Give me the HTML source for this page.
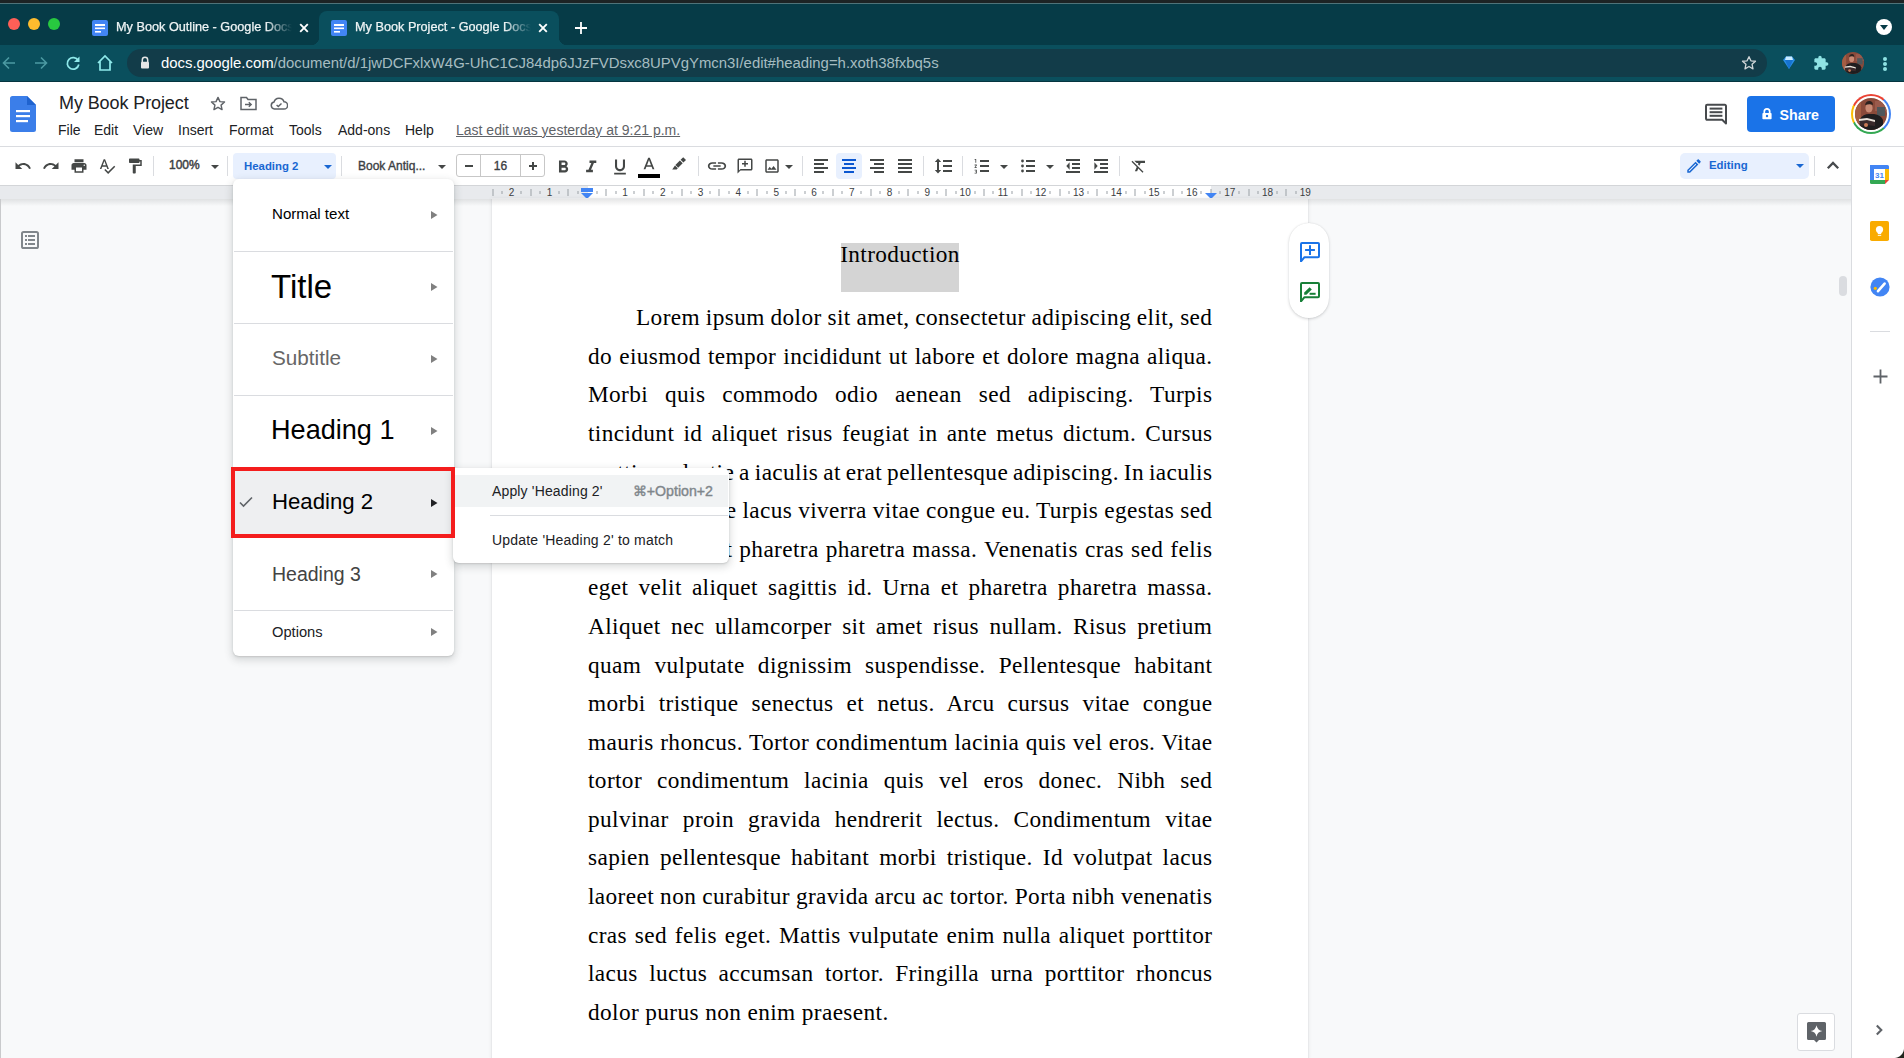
<!DOCTYPE html>
<html><head><meta charset="utf-8">
<style>
*{box-sizing:border-box;margin:0;padding:0}
html,body{width:1904px;height:1058px;overflow:hidden;background:#f8f9fa;font-family:"Liberation Sans",sans-serif;position:relative}
.abs{position:absolute}
.tabtxt{top:21px;font-size:12.7px;color:#eef4f5;white-space:nowrap;overflow:hidden;line-height:1;-webkit-text-stroke:0.25px #eef4f5}
.doc{font-family:"Liberation Serif",serif;font-size:23.3px;line-height:30px;color:#000;white-space:nowrap;letter-spacing:0.38px}
.j{text-align:justify;text-align-last:justify;white-space:normal}
.mi{white-space:nowrap;line-height:1}
</style></head>
<body>
<!-- ===== browser chrome ===== -->
<div class="abs" style="left:0;top:0;width:1904px;height:3px;background:#1d2324"></div>
<div class="abs" style="left:0;top:3px;width:1904px;height:42px;background:#063b47;border-top:1px solid #4f7379"></div>
<!-- traffic lights -->
<div class="abs" style="left:8px;top:18px;width:12px;height:12px;border-radius:50%;background:#fe5f57"></div>
<div class="abs" style="left:28px;top:18px;width:12px;height:12px;border-radius:50%;background:#febc2e"></div>
<div class="abs" style="left:48px;top:18px;width:12px;height:12px;border-radius:50%;background:#28c840"></div>
<!-- tab 1 -->
<svg class="abs" style="left:92px;top:20px" width="16" height="16" viewBox="0 0 16 16"><rect width="16" height="16" rx="2" fill="#4285f4"/><rect x="3" y="4" width="10" height="2" fill="#fff"/><rect x="3" y="7.5" width="10" height="1.6" fill="#fff"/><rect x="3" y="11" width="6" height="1.6" fill="#fff"/></svg>
<div class="abs tabtxt" style="left:116px;width:176px;-webkit-mask-image:linear-gradient(90deg,#000 85%,transparent)">My Book Outline - Google Docs</div>
<svg class="abs" style="left:298px;top:22px" width="12" height="12" viewBox="0 0 12 12"><path d="M2.2 2.2L9.8 9.8M9.8 2.2L2.2 9.8" stroke="#fff" stroke-width="1.9"/></svg>
<!-- tab 2 active -->
<div class="abs" style="left:319px;top:11px;width:240px;height:35px;background:#0a4f5d;border-radius:8px 8px 0 0"></div>
<div class="abs" style="left:311px;top:37px;width:8px;height:8px;background:radial-gradient(circle at 0 0,transparent 8px,#0a4f5d 8.5px)"></div>
<div class="abs" style="left:559px;top:37px;width:8px;height:8px;background:radial-gradient(circle at 100% 0,transparent 8px,#0a4f5d 8.5px)"></div>
<svg class="abs" style="left:331px;top:20px" width="16" height="16" viewBox="0 0 16 16"><rect width="16" height="16" rx="2" fill="#4285f4"/><rect x="3" y="4" width="10" height="2" fill="#fff"/><rect x="3" y="7.5" width="10" height="1.6" fill="#fff"/><rect x="3" y="11" width="6" height="1.6" fill="#fff"/></svg>
<div class="abs tabtxt" style="left:355px;width:176px;-webkit-mask-image:linear-gradient(90deg,#000 85%,transparent)">My Book Project - Google Docs</div>
<svg class="abs" style="left:537px;top:22px" width="12" height="12" viewBox="0 0 12 12"><path d="M2.2 2.2L9.8 9.8M9.8 2.2L2.2 9.8" stroke="#fff" stroke-width="1.9"/></svg>
<svg class="abs" style="left:574px;top:21px" width="14" height="14" viewBox="0 0 14 14"><path d="M7 1V13M1 7H13" stroke="#fff" stroke-width="1.8"/></svg>
<!-- tab search -->
<div class="abs" style="left:1876px;top:19px;width:16px;height:16px;border-radius:50%;background:#fff"></div>
<svg class="abs" style="left:1879px;top:24px" width="10" height="7" viewBox="0 0 10 7"><path d="M1 1H9L5 6Z" fill="#063b47"/></svg>
<!-- toolbar -->
<div class="abs" style="left:0;top:45px;width:1904px;height:37px;background:#0a4f5d;border-bottom:1px solid #053540"></div>
<svg class="abs" style="left:2px;top:56px" width="14" height="14" viewBox="0 0 14 14"><path d="M13 7H2M7 1.5L1.5 7L7 12.5" stroke="#4c9aa2" stroke-width="1.6" fill="none"/></svg>
<svg class="abs" style="left:34px;top:56px" width="14" height="14" viewBox="0 0 14 14"><path d="M1 7H12M7 1.5L12.5 7L7 12.5" stroke="#4c9aa2" stroke-width="1.6" fill="none"/></svg>
<svg class="abs" style="left:65px;top:55px" width="16" height="16" viewBox="0 0 16 16"><path d="M13.2 5.6A5.8 5.8 0 1 0 13.8 9.5" stroke="#8fe9ea" stroke-width="1.7" fill="none"/><path d="M14.5 1.5V7H9Z" fill="#8fe9ea"/></svg>
<svg class="abs" style="left:96px;top:54px" width="18" height="18" viewBox="0 0 18 18"><path d="M2 9L9 2L16 9M4 7.5V16H14V7.5" stroke="#8fe9ea" stroke-width="1.7" fill="none" stroke-linejoin="miter"/></svg>
<div class="abs" style="left:127px;top:49px;width:1640px;height:28px;border-radius:14px;background:#123c49"></div>
<svg class="abs" style="left:140px;top:56px" width="10" height="13" viewBox="0 0 10 13"><path d="M2.3 6V4A2.7 2.7 0 0 1 7.7 4V6" stroke="#e6e6e6" stroke-width="1.5" fill="none"/><rect x="1" y="5.8" width="8" height="6.6" rx="1" fill="#e6e6e6"/></svg>
<div class="abs" style="left:161px;top:55px;font-size:14.9px;color:#fff;white-space:nowrap">docs.google.com<span style="color:#a6bcc1">/document/d/1jwDCFxlxW4G-UhC1CJ84dp6JJzFVDsxc8UPVgYmcn3I/edit#heading=h.xoth38fxbq5s</span></div>
<svg class="abs" style="left:1741px;top:55px" width="16" height="16" viewBox="0 0 24 24"><path d="M12 2.5l2.9 6.2 6.8.7-5.1 4.6 1.4 6.7L12 17.3l-6 3.4 1.4-6.7-5.1-4.6 6.8-.7z" stroke="#d0d6d8" stroke-width="2" fill="none" stroke-linejoin="round"/></svg>
<svg class="abs" style="left:1782px;top:55px" width="14" height="16" viewBox="0 0 14 16"><path d="M1 5L4 1.5H10L13 5L7 14Z" fill="#2a8fe6"/><path d="M4 1.5H10L11 5H3Z" fill="#c9ecff"/><path d="M3 5H11L7 14Z" fill="#1673d1"/></svg>
<svg class="abs" style="left:1813px;top:55px" width="16" height="16" viewBox="0 0 24 24"><path d="M20.5 11H19V7c0-1.1-.9-2-2-2h-4V3.5C13 2.12 11.88 1 10.5 1S8 2.12 8 3.5V5H4c-1.1 0-1.99.9-1.99 2v3.8H3.5c1.49 0 2.7 1.21 2.7 2.7s-1.21 2.7-2.7 2.7H2V20c0 1.1.9 2 2 2h3.8v-1.5c0-1.49 1.21-2.7 2.7-2.7 1.49 0 2.7 1.21 2.7 2.7V22H17c1.1 0 2-.9 2-2v-4h1.5c1.38 0 2.5-1.12 2.5-2.5S21.88 11 20.5 11z" fill="#8fe3e4"/></svg>
<svg class="abs" style="left:1842px;top:52px" width="22" height="22" viewBox="0 0 32 32"><defs><clipPath id="av2"><circle cx="16" cy="16" r="16"/></clipPath></defs><g clip-path="url(#av2)"><rect width="32" height="32" fill="#8a4a3a"/><rect x="0" y="0" width="6" height="32" fill="#a45d43"/><rect x="20" y="3" width="12" height="10" fill="#9a5a4c"/><rect x="22" y="9" width="8" height="9" fill="#50565a"/><path d="M5 32V21Q8 16 14 16H19Q26 17 28 22V32Z" fill="#1f1d1f"/><ellipse cx="14" cy="10" rx="3.6" ry="4.6" fill="#c98a74"/><path d="M10 7Q11 2.5 15 3Q18 3.5 18 7Q15 5.5 10 7Z" fill="#2c2220"/><path d="M4 21L12 20L20 22L20 25L12 24L4 25Z" fill="#e9e2da"/><path d="M4 23L12 22L20 24L20 28L12 27L5 28Z" fill="#3a2a2c"/><circle cx="11" cy="27" r="2" fill="#c97a56"/></g></svg>
<div class="abs" style="left:1883px;top:57px;width:4px;height:4px;border-radius:50%;background:#8fe3e4"></div>
<div class="abs" style="left:1883px;top:62px;width:4px;height:4px;border-radius:50%;background:#8fe3e4"></div>
<div class="abs" style="left:1883px;top:67px;width:4px;height:4px;border-radius:50%;background:#8fe3e4"></div>
<!-- ===== docs header ===== -->
<div class="abs" style="left:0;top:82px;width:1904px;height:65px;background:#fff;border-bottom:1px solid #dadce0"></div>
<svg class="abs" style="left:10px;top:96px" width="26" height="36" viewBox="0 0 26 36"><path d="M0 2.5A2.5 2.5 0 0 1 2.5 0H17L26 9V33.5A2.5 2.5 0 0 1 23.5 36H2.5A2.5 2.5 0 0 1 0 33.5Z" fill="#3b7ee9"/><path d="M17 0V9H26Z" fill="#1f63cf"/><rect x="6" y="14" width="14" height="2.2" fill="#fff"/><rect x="6" y="19" width="14" height="2.2" fill="#fff"/><rect x="6" y="24" width="12" height="2.2" fill="#fff"/></svg>
<div class="abs" style="left:59px;top:93px;font-size:18px;color:#202124;white-space:nowrap;letter-spacing:-0.1px">My Book Project</div>
<svg class="abs" style="left:209px;top:95px" width="18" height="18" viewBox="0 0 24 24"><path d="M12 3.2l2.6 5.6 6.1.6-4.6 4.1 1.3 6-5.4-3.1-5.4 3.1 1.3-6-4.6-4.1 6.1-.6z" stroke="#5f6368" stroke-width="1.9" fill="none" stroke-linejoin="round"/></svg>
<svg class="abs" style="left:240px;top:96px" width="17" height="15" viewBox="0 0 17 15"><path d="M1 2V13.5H16V3.5H8L6.5 1.5H1Z" stroke="#5f6368" stroke-width="1.5" fill="none"/><path d="M5 8.5H11M8.8 6.2L11.2 8.5L8.8 10.8" stroke="#5f6368" stroke-width="1.4" fill="none"/></svg>
<svg class="abs" style="left:270px;top:97px" width="18" height="13" viewBox="0 0 18 13"><path d="M4.5 12A3.5 3.5 0 0 1 4 5.1A5.2 5.2 0 0 1 14 4.8A3.6 3.6 0 0 1 14 12Z" stroke="#5f6368" stroke-width="1.5" fill="none"/><path d="M6.6 8L8.3 9.6L11.5 6.4" stroke="#5f6368" stroke-width="1.4" fill="none"/></svg>
<div class="abs" style="left:58px;top:122px;font-size:14px;color:#202124;white-space:nowrap;word-spacing:0">
<span style="position:absolute;left:0">File</span><span style="position:absolute;left:36px">Edit</span><span style="position:absolute;left:75px">View</span><span style="position:absolute;left:120px">Insert</span><span style="position:absolute;left:171px">Format</span><span style="position:absolute;left:231px">Tools</span><span style="position:absolute;left:280px">Add-ons</span><span style="position:absolute;left:347px">Help</span><span style="position:absolute;left:398px;color:#5f6368;text-decoration:underline">Last edit was yesterday at 9:21 p.m.</span></div>
<svg class="abs" style="left:1705px;top:103px" width="22" height="22" viewBox="0 0 22 22"><path d="M2.2 1.8H19.8A1.2 1.2 0 0 1 21 3V20.5L17.2 16.8H2.2A1.2 1.2 0 0 1 1 15.6V3A1.2 1.2 0 0 1 2.2 1.8Z" stroke="#474a4d" stroke-width="2" fill="none" stroke-linejoin="round"/><rect x="4.6" y="4.6" width="12.8" height="2" fill="#474a4d"/><rect x="4.6" y="8.2" width="12.8" height="2" fill="#474a4d"/><rect x="4.6" y="11.8" width="12.8" height="2" fill="#474a4d"/></svg>
<div class="abs" style="left:1747px;top:96px;width:88px;height:36px;border-radius:4px;background:#1a73e8"></div>
<svg class="abs" style="left:1761.5px;top:108px" width="10" height="11.5" viewBox="0 0 10 11.5"><path d="M2.3 5.2V3.6A2.7 2.7 0 0 1 7.7 3.6V5.2" stroke="#fff" stroke-width="1.7" fill="none"/><rect x="0.4" y="4.9" width="9.2" height="6.4" rx="0.8" fill="#fff"/><circle cx="5" cy="8" r="1.2" fill="#1a73e8"/></svg>
<div class="abs" style="left:1779.5px;top:106.5px;font-size:14.2px;font-weight:bold;color:#fff">Share</div>
<div class="abs" style="left:1851px;top:94px;width:40px;height:40px;border-radius:50%;background:conic-gradient(#ea4335 0 42deg,#4285f4 42deg 138deg,#34a853 138deg 243deg,#fbbc04 243deg 297deg,#ea4335 297deg)"></div>
<div class="abs" style="left:1853px;top:96px;width:36px;height:36px;border-radius:50%;background:#fff"></div>
<svg class="abs" style="left:1855px;top:98px" width="32" height="32" viewBox="0 0 32 32"><defs><clipPath id="av1"><circle cx="16" cy="16" r="16"/></clipPath></defs><g clip-path="url(#av1)"><rect width="32" height="32" fill="#8a4a3a"/><rect x="0" y="0" width="6" height="32" fill="#a45d43"/><rect x="20" y="3" width="12" height="10" fill="#9a5a4c"/><rect x="22" y="9" width="8" height="9" fill="#50565a"/><path d="M5 32V21Q8 16 14 16H19Q26 17 28 22V32Z" fill="#1f1d1f"/><ellipse cx="14" cy="10" rx="3.6" ry="4.6" fill="#c98a74"/><path d="M10 7Q11 2.5 15 3Q18 3.5 18 7Q15 5.5 10 7Z" fill="#2c2220"/><path d="M4 21L12 20L20 22L20 25L12 24L4 25Z" fill="#e9e2da"/><path d="M4 23L12 22L20 24L20 28L12 27L5 28Z" fill="#3a2a2c"/><circle cx="11" cy="27" r="2" fill="#c97a56"/></g></svg>
<!-- ===== toolbar ===== -->
<div class="abs" style="left:0;top:147px;width:1851px;height:38px;background:#fff"></div>
<svg class="abs" style="left:13.5px;top:157px" width="18" height="18" viewBox="0 0 24 24"><path d="M12.5 8c-2.65 0-5.05.99-6.9 2.6L2 7v9h9l-3.62-3.62c1.39-1.16 3.16-1.88 5.12-1.880 3.54 0 6.55 2.31 7.6 5.5l2.37-.78C21.08 11.03 17.15 8 12.5 8z" fill="#444746"/></svg>
<svg class="abs" style="left:42px;top:157px" width="18" height="18" viewBox="0 0 24 24"><path d="M18.4 10.6C16.55 8.99 14.15 8 11.5 8c-4.65 0-8.58 3.03-9.96 7.22L3.9 16c1.05-3.19 4.05-5.5 7.6-5.5 1.950 0 3.73.72 5.12 1.88L13 16h9V7l-3.6 3.6z" fill="#444746"/></svg>
<svg class="abs" style="left:69.5px;top:157px" width="18" height="18" viewBox="0 0 24 24"><path d="M19 8H5c-1.66 0-3 1.34-3 3v6h4v4h12v-4h4v-6c0-1.66-1.34-3-3-3zm-3 11H8v-5h8v5zm3-7c-.55 0-1-.45-1-1s.45-1 1-1 1 .45 1 1-.45 1-1 1zm-1-9H6v4h12V3z" fill="#444746"/></svg>
<svg class="abs" style="left:98px;top:157px" width="18" height="18" viewBox="0 0 24 24"><path d="M12.45 16h2.09L9.43 3H7.57L2.46 16h2.09l1.12-3h5.64l1.14 3zm-6.02-5L8.5 5.48 10.57 11H6.43zm15.16.59l-8.09 8.09L9.83 16l-1.41 1.41 5.09 5.09L23 13l-1.41-1.41z" fill="#444746"/></svg>
<svg class="abs" style="left:126px;top:157px" width="18" height="18" viewBox="0 0 24 24"><path d="M18 4V3c0-.55-.45-1-1-1H5c-.55 0-1 .45-1 1v4c0 .55.45 1 1 1h12c.55 0 1-.45 1-1V6h1v4H9v11c0 .55.45 1 1 1h2c.55 0 1-.45 1-1v-9h8V4h-3z" fill="#444746"/></svg>
<div class="abs" style="left:153px;top:156px;width:1px;height:20px;background:#dadce0"></div>
<div class="abs" style="left:169px;top:158px;font-size:12px;color:#3c4043;-webkit-text-stroke:0.45px #3c4043">100%</div>
<svg class="abs" style="left:211px;top:165px" width="8" height="4" viewBox="0 0 8 4"><path d="M0 0H8L4 4Z" fill="#444746"/></svg>
<div class="abs" style="left:227px;top:156px;width:1px;height:20px;background:#dadce0"></div>
<div class="abs" style="left:233px;top:153px;width:103px;height:26px;border-radius:4px;background:#e8f0fe"></div>
<div class="abs" style="left:244px;top:159.7px;font-size:11.4px;font-weight:bold;color:#1967d2">Heading 2</div>
<svg class="abs" style="left:324px;top:165px" width="8" height="4" viewBox="0 0 8 4"><path d="M0 0H8L4 4Z" fill="#1967d2"/></svg>
<div class="abs" style="left:341px;top:156px;width:1px;height:20px;background:#dadce0"></div>
<div class="abs" style="left:358px;top:159px;font-size:12px;color:#3c4043;-webkit-text-stroke:0.35px #3c4043">Book Antiq...</div>
<svg class="abs" style="left:438px;top:165px" width="8" height="4" viewBox="0 0 8 4"><path d="M0 0H8L4 4Z" fill="#444746"/></svg>
<div class="abs" style="left:456px;top:154px;width:89px;height:23px;border:1px solid #c7c7c7;border-radius:3px"></div>
<div class="abs" style="left:480px;top:155px;width:1px;height:21px;background:#c7c7c7"></div>
<div class="abs" style="left:520px;top:155px;width:1px;height:21px;background:#c7c7c7"></div>
<div class="abs" style="left:465px;top:165px;width:8px;height:2.2px;background:#444746"></div>
<div class="abs" style="left:528.5px;top:165px;width:8.6px;height:2.2px;background:#444746"></div><div class="abs" style="left:531.7px;top:161.8px;width:2.2px;height:8.4px;background:#444746"></div>
<div class="abs" style="left:481px;top:159px;width:39px;text-align:center;font-size:12px;color:#3c4043;-webkit-text-stroke:0.35px #3c4043">16</div>
<svg class="abs" style="left:552.7px;top:156.5px" width="20.5" height="20.5" viewBox="0 0 24 24"><path d="M15.6 10.79c.97-.67 1.65-1.77 1.65-2.79 0-2.26-1.75-4-4-4H7v14h7.04c2.09 0 3.710-1.7 3.71-3.79 0-1.52-.86-2.82-2.15-3.42zM10 6.5h3c.83 0 1.5.67 1.5 1.5s-.67 1.5-1.5 1.5h-3v-3zm3.5 9H10v-3h3.5c.83 0 1.5.67 1.5 1.5s-.67 1.5-1.5 1.5z" fill="#444746"/></svg>
<svg class="abs" style="left:580.7px;top:156.5px" width="20.4" height="20.4" viewBox="0 0 24 24"><path d="M10 4v3h2.21l-3.42 8H6v3h8v-3h-2.21l3.42-8H18V4z" fill="#444746"/></svg>
<svg class="abs" style="left:610px;top:157.3px" width="20" height="20" viewBox="0 0 24 24"><path d="M12 17c3.31 0 6-2.69 6-6V3h-2.5v8c0 1.93-1.57 3.5-3.5 3.5S8.5 12.93 8.5 11V3H6v8c0 3.31 2.69 6 6 6zm-7 2v2h14v-2H5z" fill="#444746"/></svg>
<svg class="abs" style="left:639.1px;top:156.2px" width="20" height="20" viewBox="0 0 24 24"><path d="M11 2L5.5 16h2.25l1.12-3h6.25l1.12 3h2.25L13 2h-2zm-1.38 9L12 4.67 14.38 11H9.62z" fill="#444746"/></svg>
<svg class="abs" style="left:671px;top:156px" width="16" height="15" viewBox="0 0 16 15"><path d="M12.2 1.2L15 4L12.4 6.6L9.6 3.8Z" fill="#444746"/><path d="M8.9 4.5L11.7 7.3L7.2 11.8L4.4 9Z" fill="#444746"/><path d="M4 9.4L6.8 12.2L5.6 13.6H1.2Z" fill="#444746"/></svg>
<div class="abs" style="left:638px;top:174px;width:22px;height:4px;background:#000"></div>
<div class="abs" style="left:698px;top:156px;width:1px;height:20px;background:#dadce0"></div>
<svg class="abs" style="left:706px;top:157px" width="22" height="18" viewBox="0 0 24 24" preserveAspectRatio="none"><path d="M3.9 12c0-1.71 1.39-3.1 3.1-3.1h4V7H7c-2.76 0-5 2.24-5 5s2.24 5 5 5h4v-1.9H7c-1.71 0-3.1-1.39-3.1-3.1zM8 13h8v-2H8v2zm9-6h-4v1.9h4c1.71 0 3.1 1.39 3.1 3.1s-1.39 3.1-3.1 3.1h-4V17h4c2.76 0 5-2.24 5-5s-2.24-5-5-5z" fill="#444746"/></svg>
<svg class="abs" style="left:735.5px;top:157px" width="18" height="18" viewBox="0 0 24 24"><path d="M20 2H4c-1.1 0-2 .9-2 2v18l4-4h14c1.1 0 2-.9 2-2V4c0-1.1-.9-2-2-2zm0 14H6l-2 2V4h16v12zM11 5h2v3h3v2h-3v3h-2v-3H8V8h3z" fill="#444746"/></svg>
<svg class="abs" style="left:763px;top:157px" width="18" height="18" viewBox="0 0 24 24"><path d="M19 5v14H5V5h14m0-2H5c-1.1 0-2 .9-2 2v14c0 1.1.9 2 2 2h14c1.1 0 2-.9 2-2V5c0-1.1-.9-2-2-2zm-4.86 8.86l-3 3.87L9 13.14 6 17h12l-3.86-5.14z" fill="#444746"/></svg>
<svg class="abs" style="left:785px;top:165px" width="8" height="4" viewBox="0 0 8 4"><path d="M0 0H8L4 4Z" fill="#444746"/></svg>
<div class="abs" style="left:802px;top:156px;width:1px;height:20px;background:#dadce0"></div>
<div class="abs" style="left:836px;top:153px;width:26px;height:26px;border-radius:4px;background:#e8f0fe"></div>
<div class="abs" style="left:814px;top:159px;width:14px;height:2px;background:#444746"></div><div class="abs" style="left:814px;top:163px;width:10px;height:2px;background:#444746"></div><div class="abs" style="left:814px;top:167px;width:14px;height:2px;background:#444746"></div><div class="abs" style="left:814px;top:171px;width:10px;height:2px;background:#444746"></div>
<div class="abs" style="left:842px;top:159px;width:14px;height:2px;background:#0b57d0"></div><div class="abs" style="left:844px;top:163px;width:10px;height:2px;background:#0b57d0"></div><div class="abs" style="left:842px;top:167px;width:14px;height:2px;background:#0b57d0"></div><div class="abs" style="left:844px;top:171px;width:10px;height:2px;background:#0b57d0"></div>
<div class="abs" style="left:870px;top:159px;width:14px;height:2px;background:#444746"></div><div class="abs" style="left:874px;top:163px;width:10px;height:2px;background:#444746"></div><div class="abs" style="left:870px;top:167px;width:14px;height:2px;background:#444746"></div><div class="abs" style="left:874px;top:171px;width:10px;height:2px;background:#444746"></div>
<div class="abs" style="left:898px;top:159px;width:14px;height:2px;background:#444746"></div><div class="abs" style="left:898px;top:163px;width:14px;height:2px;background:#444746"></div><div class="abs" style="left:898px;top:167px;width:14px;height:2px;background:#444746"></div><div class="abs" style="left:898px;top:171px;width:14px;height:2px;background:#444746"></div>
<div class="abs" style="left:923px;top:156px;width:1px;height:20px;background:#dadce0"></div>
<svg class="abs" style="left:934px;top:158px" width="8" height="16" viewBox="0 0 8 16"><path d="M4 0.5L7.2 4H5V12H7.2L4 15.5L0.8 12H3V4H0.8Z" fill="#444746"/></svg>
<div class="abs" style="left:943px;top:160px;width:9px;height:2px;background:#444746"></div><div class="abs" style="left:943px;top:165px;width:9px;height:2px;background:#444746"></div><div class="abs" style="left:943px;top:170px;width:9px;height:2px;background:#444746"></div>
<div class="abs" style="left:962px;top:156px;width:1px;height:20px;background:#dadce0"></div>
<svg class="abs" style="left:974px;top:158px" width="4" height="16" viewBox="0 0 4 16"><path d="M0.6 1H2.2V4.8H1.4V1.8H0.6Z M0.6 6.6H2.8V7.4L1.4 9.2H2.8V10H0.6V9.3L2 7.4H0.6Z M0.6 11.8H2.8V15.6H0.6V14.8H2V14.1H1.2V13.4H2V12.6H0.6Z" fill="#444746"/></svg>
<div class="abs" style="left:980px;top:160px;width:9px;height:2px;background:#444746"></div><div class="abs" style="left:980px;top:165px;width:9px;height:2px;background:#444746"></div><div class="abs" style="left:980px;top:170px;width:9px;height:2px;background:#444746"></div>
<svg class="abs" style="left:1000px;top:165px" width="8" height="4" viewBox="0 0 8 4"><path d="M0 0H8L4 4Z" fill="#444746"/></svg>
<svg class="abs" style="left:1021px;top:158px" width="3" height="16" viewBox="0 0 3 16"><circle cx="1.5" cy="3" r="1.4" fill="#444746"/><circle cx="1.5" cy="8" r="1.4" fill="#444746"/><circle cx="1.5" cy="13" r="1.4" fill="#444746"/></svg>
<div class="abs" style="left:1026px;top:160px;width:9px;height:2px;background:#444746"></div><div class="abs" style="left:1026px;top:165px;width:9px;height:2px;background:#444746"></div><div class="abs" style="left:1026px;top:170px;width:9px;height:2px;background:#444746"></div>
<svg class="abs" style="left:1046px;top:165px" width="8" height="4" viewBox="0 0 8 4"><path d="M0 0H8L4 4Z" fill="#444746"/></svg>
<div class="abs" style="left:1066px;top:159px;width:14px;height:2px;background:#444746"></div><div class="abs" style="left:1072px;top:163px;width:8px;height:2px;background:#444746"></div><div class="abs" style="left:1072px;top:167px;width:8px;height:2px;background:#444746"></div><div class="abs" style="left:1066px;top:171px;width:14px;height:2px;background:#444746"></div>
<svg class="abs" style="left:1066px;top:162px" width="4" height="8" viewBox="0 0 4 8"><path d="M3.6 0.3V7.7L0.3 4Z" fill="#444746"/></svg>
<div class="abs" style="left:1094px;top:159px;width:14px;height:2px;background:#444746"></div><div class="abs" style="left:1100px;top:163px;width:8px;height:2px;background:#444746"></div><div class="abs" style="left:1100px;top:167px;width:8px;height:2px;background:#444746"></div><div class="abs" style="left:1094px;top:171px;width:14px;height:2px;background:#444746"></div>
<svg class="abs" style="left:1094px;top:162px" width="4" height="8" viewBox="0 0 4 8"><path d="M0.4 0.3V7.7L3.7 4Z" fill="#444746"/></svg>
<div class="abs" style="left:1119px;top:156px;width:1px;height:20px;background:#dadce0"></div>
<svg class="abs" style="left:1129.5px;top:157px" width="18" height="18" viewBox="0 0 24 24"><path d="M3.27 5L2 6.27l6.97 6.97L6.5 19h3l1.57-3.66L16.73 21 18 19.73 3.55 5.27 3.27 5zM6 5v.18L8.82 8h2.4l-.72 1.68 2.1 2.1L14.21 8H20V5H6z" fill="#444746"/></svg>
<div class="abs" style="left:1680px;top:153px;width:129px;height:26px;border-radius:5px;background:#e8f0fe"></div>
<svg class="abs" style="left:1684.5px;top:156.5px" width="18" height="18" viewBox="0 0 24 24"><path d="M3 17.25V21h3.75L17.81 9.94l-3.75-3.75L3 17.25zM5.92 19H5v-.92l9.06-9.06.92.92L5.92 19zM20.71 5.63l-2.34-2.34c-.2-.2-.45-.29-.71-.29s-.51.1-.7.29l-1.83 1.83 3.75 3.75 1.83-1.83c.39-.39.39-1.02 0-1.41z" fill="#1967d2"/></svg>
<div class="abs" style="left:1709px;top:159px;font-size:11.4px;font-weight:bold;color:#1967d2">Editing</div>
<svg class="abs" style="left:1796px;top:164px" width="8" height="4" viewBox="0 0 8 4"><path d="M0 0H8L4 4Z" fill="#1967d2"/></svg>
<div class="abs" style="left:1814px;top:156px;width:1px;height:20px;background:#dadce0"></div>
<svg class="abs" style="left:1825px;top:159px" width="16" height="12" viewBox="0 0 16 12"><path d="M2.8 9.2L8 4L13.2 9.2" stroke="#474a4d" stroke-width="2.3" fill="none"/></svg>
<!-- ===== ruler ===== -->
<div class="abs" style="left:0;top:185px;width:1851px;height:15px;background:#e8eaed;border-top:1px solid #d3d5d8;border-bottom:1px solid #d3d5d8"></div>
<div class="abs" style="left:588px;top:186px;width:623px;height:13px;background:#fff"></div>
<svg class="abs" style="left:0;top:182px" width="1851" height="20" viewBox="0 0 1851 20"><rect x="492.5" y="7" width="1" height="7" fill="#9aa0a6"/><rect x="501.5" y="9" width="1" height="3" fill="#9aa0a6"/><text x="511.61" y="13.9" font-size="10px" text-anchor="middle" fill="#3c4043" font-family="Liberation Sans">2</text><rect x="520.5" y="9" width="1" height="3" fill="#9aa0a6"/><rect x="530.5" y="7" width="1" height="7" fill="#9aa0a6"/><rect x="539.5" y="9" width="1" height="3" fill="#9aa0a6"/><text x="549.41" y="13.9" font-size="10px" text-anchor="middle" fill="#3c4043" font-family="Liberation Sans">1</text><rect x="558.5" y="9" width="1" height="3" fill="#9aa0a6"/><rect x="567.5" y="7" width="1" height="7" fill="#9aa0a6"/><rect x="577.5" y="9" width="1" height="3" fill="#9aa0a6"/><rect x="596.5" y="9" width="1" height="3" fill="#9aa0a6"/><rect x="605.5" y="7" width="1" height="7" fill="#9aa0a6"/><rect x="615.5" y="9" width="1" height="3" fill="#9aa0a6"/><text x="625.00" y="13.9" font-size="10px" text-anchor="middle" fill="#3c4043" font-family="Liberation Sans">1</text><rect x="633.5" y="9" width="1" height="3" fill="#9aa0a6"/><rect x="643.5" y="7" width="1" height="7" fill="#9aa0a6"/><rect x="652.5" y="9" width="1" height="3" fill="#9aa0a6"/><text x="662.79" y="13.9" font-size="10px" text-anchor="middle" fill="#3c4043" font-family="Liberation Sans">2</text><rect x="671.5" y="9" width="1" height="3" fill="#9aa0a6"/><rect x="681.5" y="7" width="1" height="7" fill="#9aa0a6"/><rect x="690.5" y="9" width="1" height="3" fill="#9aa0a6"/><text x="700.59" y="13.9" font-size="10px" text-anchor="middle" fill="#3c4043" font-family="Liberation Sans">3</text><rect x="709.5" y="9" width="1" height="3" fill="#9aa0a6"/><rect x="718.5" y="7" width="1" height="7" fill="#9aa0a6"/><rect x="728.5" y="9" width="1" height="3" fill="#9aa0a6"/><text x="738.38" y="13.9" font-size="10px" text-anchor="middle" fill="#3c4043" font-family="Liberation Sans">4</text><rect x="747.5" y="9" width="1" height="3" fill="#9aa0a6"/><rect x="756.5" y="7" width="1" height="7" fill="#9aa0a6"/><rect x="766.5" y="9" width="1" height="3" fill="#9aa0a6"/><text x="776.18" y="13.9" font-size="10px" text-anchor="middle" fill="#3c4043" font-family="Liberation Sans">5</text><rect x="785.5" y="9" width="1" height="3" fill="#9aa0a6"/><rect x="794.5" y="7" width="1" height="7" fill="#9aa0a6"/><rect x="804.5" y="9" width="1" height="3" fill="#9aa0a6"/><text x="813.97" y="13.9" font-size="10px" text-anchor="middle" fill="#3c4043" font-family="Liberation Sans">6</text><rect x="822.5" y="9" width="1" height="3" fill="#9aa0a6"/><rect x="832.5" y="7" width="1" height="7" fill="#9aa0a6"/><rect x="841.5" y="9" width="1" height="3" fill="#9aa0a6"/><text x="851.77" y="13.9" font-size="10px" text-anchor="middle" fill="#3c4043" font-family="Liberation Sans">7</text><rect x="860.5" y="9" width="1" height="3" fill="#9aa0a6"/><rect x="870.5" y="7" width="1" height="7" fill="#9aa0a6"/><rect x="879.5" y="9" width="1" height="3" fill="#9aa0a6"/><text x="889.56" y="13.9" font-size="10px" text-anchor="middle" fill="#3c4043" font-family="Liberation Sans">8</text><rect x="898.5" y="9" width="1" height="3" fill="#9aa0a6"/><rect x="907.5" y="7" width="1" height="7" fill="#9aa0a6"/><rect x="917.5" y="9" width="1" height="3" fill="#9aa0a6"/><text x="927.36" y="13.9" font-size="10px" text-anchor="middle" fill="#3c4043" font-family="Liberation Sans">9</text><rect x="936.5" y="9" width="1" height="3" fill="#9aa0a6"/><rect x="945.5" y="7" width="1" height="7" fill="#9aa0a6"/><rect x="955.5" y="9" width="1" height="3" fill="#9aa0a6"/><text x="965.15" y="13.9" font-size="10px" text-anchor="middle" fill="#3c4043" font-family="Liberation Sans">10</text><rect x="974.5" y="9" width="1" height="3" fill="#9aa0a6"/><rect x="983.5" y="7" width="1" height="7" fill="#9aa0a6"/><rect x="992.5" y="9" width="1" height="3" fill="#9aa0a6"/><text x="1002.95" y="13.9" font-size="10px" text-anchor="middle" fill="#3c4043" font-family="Liberation Sans">11</text><rect x="1011.5" y="9" width="1" height="3" fill="#9aa0a6"/><rect x="1021.5" y="7" width="1" height="7" fill="#9aa0a6"/><rect x="1030.5" y="9" width="1" height="3" fill="#9aa0a6"/><text x="1040.74" y="13.9" font-size="10px" text-anchor="middle" fill="#3c4043" font-family="Liberation Sans">12</text><rect x="1049.5" y="9" width="1" height="3" fill="#9aa0a6"/><rect x="1059.5" y="7" width="1" height="7" fill="#9aa0a6"/><rect x="1068.5" y="9" width="1" height="3" fill="#9aa0a6"/><text x="1078.54" y="13.9" font-size="10px" text-anchor="middle" fill="#3c4043" font-family="Liberation Sans">13</text><rect x="1087.5" y="9" width="1" height="3" fill="#9aa0a6"/><rect x="1096.5" y="7" width="1" height="7" fill="#9aa0a6"/><rect x="1106.5" y="9" width="1" height="3" fill="#9aa0a6"/><text x="1116.33" y="13.9" font-size="10px" text-anchor="middle" fill="#3c4043" font-family="Liberation Sans">14</text><rect x="1125.5" y="9" width="1" height="3" fill="#9aa0a6"/><rect x="1134.5" y="7" width="1" height="7" fill="#9aa0a6"/><rect x="1144.5" y="9" width="1" height="3" fill="#9aa0a6"/><text x="1154.12" y="13.9" font-size="10px" text-anchor="middle" fill="#3c4043" font-family="Liberation Sans">15</text><rect x="1163.5" y="9" width="1" height="3" fill="#9aa0a6"/><rect x="1172.5" y="7" width="1" height="7" fill="#9aa0a6"/><rect x="1181.5" y="9" width="1" height="3" fill="#9aa0a6"/><text x="1191.92" y="13.9" font-size="10px" text-anchor="middle" fill="#3c4043" font-family="Liberation Sans">16</text><rect x="1200.5" y="9" width="1" height="3" fill="#9aa0a6"/><rect x="1210.5" y="7" width="1" height="7" fill="#9aa0a6"/><rect x="1219.5" y="9" width="1" height="3" fill="#9aa0a6"/><text x="1229.72" y="13.9" font-size="10px" text-anchor="middle" fill="#3c4043" font-family="Liberation Sans">17</text><rect x="1238.5" y="9" width="1" height="3" fill="#9aa0a6"/><rect x="1248.5" y="7" width="1" height="7" fill="#9aa0a6"/><rect x="1257.5" y="9" width="1" height="3" fill="#9aa0a6"/><text x="1267.51" y="13.9" font-size="10px" text-anchor="middle" fill="#3c4043" font-family="Liberation Sans">18</text><rect x="1276.5" y="9" width="1" height="3" fill="#9aa0a6"/><rect x="1285.5" y="7" width="1" height="7" fill="#9aa0a6"/><rect x="1295.5" y="9" width="1" height="3" fill="#9aa0a6"/><text x="1305.31" y="13.9" font-size="10px" text-anchor="middle" fill="#3c4043" font-family="Liberation Sans">19</text></svg>
<div class="abs" style="left:581px;top:188px;width:12px;height:4px;background:#4285f4"></div>
<svg class="abs" style="left:581px;top:193px" width="12" height="6" viewBox="0 0 12 6"><path d="M0 0H12L6 6Z" fill="#4285f4"/></svg>
<svg class="abs" style="left:1205px;top:193px" width="12" height="6" viewBox="0 0 12 6"><path d="M0 0H12L6 6Z" fill="#4285f4"/></svg>
<!-- ===== content ===== -->
<div class="abs" style="left:0;top:199px;width:1851px;height:859px;background:#f8f9fa;border-left:1px solid #c9cacc"></div>
<div class="abs" style="left:492px;top:199px;width:816px;height:859px;background:#fff;box-shadow:0 0 0 1px #e8e9eb,0 0 3px 1px rgba(60,64,67,.08)"></div>
<div class="abs" style="left:1px;top:199px;width:1850px;height:7px;background:linear-gradient(rgba(60,64,67,.13),rgba(60,64,67,0))"></div>
<svg class="abs" style="left:21px;top:231px" width="18" height="18" viewBox="0 0 18 18"><rect x="1" y="1" width="16" height="16" rx="1.6" stroke="#80868b" stroke-width="2" fill="none"/><rect x="4" y="4" width="2" height="2" fill="#80868b"/><rect x="7" y="4" width="7" height="2" fill="#80868b"/><rect x="4" y="8" width="2" height="2" fill="#80868b"/><rect x="7" y="8" width="7" height="2" fill="#80868b"/><rect x="4" y="12" width="2" height="2" fill="#80868b"/><rect x="7" y="12" width="7" height="2" fill="#80868b"/></svg>
<!-- floating comment pill -->
<div class="abs" style="left:1289px;top:223px;width:40px;height:95px;border-radius:20px;background:#fff;box-shadow:0 1px 3px rgba(60,64,67,.22),0 0 1px rgba(60,64,67,.15)"></div>
<svg class="abs" style="left:1300px;top:242px" width="20" height="20" viewBox="0 0 20 20"><path d="M2 1H18A1 1 0 0 1 19 2V14.2A1 1 0 0 1 18 15.2H4.5L1 19.4V2A1 1 0 0 1 2 1Z" stroke="#1a73e8" stroke-width="2" fill="none" stroke-linejoin="round"/><path d="M10 3.2V13M5.1 8.1H14.9" stroke="#1a73e8" stroke-width="2"/></svg>
<svg class="abs" style="left:1300px;top:282px" width="20" height="20" viewBox="0 0 20 20"><path d="M2 1H18A1 1 0 0 1 19 2V14.2A1 1 0 0 1 18 15.2H4.5L1 19.4V2A1 1 0 0 1 2 1Z" stroke="#188038" stroke-width="2" fill="none" stroke-linejoin="round"/><path d="M4.2 10.6L9.6 5.2L11.8 7.4L6.4 12.8H4.2Z" fill="#188038"/><rect x="9.6" y="10.8" width="6" height="2" fill="#188038"/></svg>
<!-- scrollbar -->
<div class="abs" style="left:1839px;top:276px;width:8px;height:20px;border-radius:4px;background:#dadce0"></div>
<!-- right side panel -->
<div class="abs" style="left:1851px;top:147px;width:53px;height:911px;background:#fff;border-left:1px solid #dadce0"></div>
<svg class="abs" style="left:1870px;top:165px" width="19" height="19" viewBox="0 0 19 19"><rect x="0" y="0" width="19" height="19" rx="1.5" fill="#fff"/><path d="M1.5 0H17.5A1.5 1.5 0 0 1 19 1.5V4H0V1.5A1.5 1.5 0 0 1 1.5 0Z" fill="#4285f4"/><rect x="0" y="0" width="4" height="15" fill="#4285f4"/><rect x="15" y="4" width="4" height="11" fill="#fbbc04"/><path d="M0 15H15V19H1.5A1.5 1.5 0 0 1 0 17.5Z" fill="#34a853"/><path d="M15 15H19L15 19Z" fill="#ea4335"/><text x="9.5" y="12.8" font-size="8" font-weight="bold" text-anchor="middle" fill="#4285f4" font-family="Liberation Sans">31</text></svg>
<svg class="abs" style="left:1870px;top:221px" width="19" height="20" viewBox="0 0 19 20"><rect width="19" height="20" rx="1.8" fill="#f9ab00"/><circle cx="9.5" cy="8.6" r="3.6" fill="#fff"/><rect x="7.8" y="11" width="3.4" height="2" fill="#fff"/><rect x="7.8" y="13.8" width="3.4" height="1" fill="#fff"/></svg>
<svg class="abs" style="left:1870px;top:277px" width="20" height="20" viewBox="0 0 20 20"><circle cx="10" cy="10" r="9.6" fill="#4285f4"/><path d="M8 14.2L14.6 6.6" stroke="#fff" stroke-width="2.6" stroke-linecap="round"/><circle cx="5.3" cy="11.3" r="1.6" fill="#fbbc04"/></svg>
<div class="abs" style="left:1870px;top:331px;width:20px;height:1px;background:#dadce0"></div>
<svg class="abs" style="left:1873px;top:369px" width="15" height="15" viewBox="0 0 15 15"><path d="M7.5 0.5V14.5M0.5 7.5H14.5" stroke="#5f6368" stroke-width="1.8"/></svg>
<svg class="abs" style="left:1874px;top:1023px" width="10" height="14" viewBox="0 0 10 14"><path d="M2.8 2.5L7.3 7L2.8 11.5" stroke="#5f6368" stroke-width="2.1" fill="none"/></svg>
<div class="abs" style="left:1894px;top:1048px;width:10px;height:10px;background:radial-gradient(circle at 0 0,transparent 9.5px,#22261e 10.5px)"></div>
<!-- explore -->
<div class="abs" style="left:1797px;top:1013px;width:38px;height:38px;border-radius:3px;background:#fff;border:1px solid #dadce0"></div>
<svg class="abs" style="left:1807px;top:1022px" width="19" height="21" viewBox="0 0 19 21"><path d="M1.5 0H17.5A1.5 1.5 0 0 1 19 1.5V16.5A1.5 1.5 0 0 1 17.5 18H12L9.5 20.5L7 18H1.5A1.5 1.5 0 0 1 0 16.5V1.5A1.5 1.5 0 0 1 1.5 0Z" fill="#5f6368"/><path d="M9.5 3.2Q10.3 8.2 15.3 9Q10.3 9.8 9.5 14.8Q8.7 9.8 3.7 9Q8.7 8.2 9.5 3.2Z" fill="#fff"/></svg>
<!-- ===== document ===== -->
<div class="abs" style="left:841px;top:243px;width:118px;height:49px;background:#d4d4d4"></div>
<div class="abs doc" style="left:800px;top:239.40px;width:200px;text-align:center">Introduction</div>
<div class="abs doc" style="left:636px;top:302.30px;word-spacing:-0.355px">Lorem ipsum dolor sit amet, consectetur adipiscing elit, sed</div>
<div class="abs doc" style="left:588px;top:340.88px;word-spacing:0.910px">do eiusmod tempor incididunt ut labore et dolore magna aliqua.</div>
<div class="abs doc" style="left:588px;top:379.46px;word-spacing:10.702px">Morbi quis commodo odio aenean sed adipiscing. Turpis</div>
<div class="abs doc" style="left:588px;top:418.04px;word-spacing:3.018px">tincidunt id aliquet risus feugiat in ante metus dictum. Cursus</div>
<div class="abs doc" style="left:588px;top:456.62px;word-spacing:-1.251px">mattis molestie a iaculis at erat pellentesque adipiscing. In iaculis</div>
<div class="abs doc" style="left:588px;top:495.20px;word-spacing:-0.226px">nunc sed augue lacus viverra vitae congue eu. Turpis egestas sed</div>
<div class="abs doc" style="left:588px;top:533.78px;word-spacing:0.882px">tempus urna et pharetra pharetra massa. Venenatis cras sed felis</div>
<div class="abs doc" style="left:588px;top:572.36px;word-spacing:3.924px">eget velit aliquet sagittis id. Urna et pharetra pharetra massa.</div>
<div class="abs doc" style="left:588px;top:610.94px;word-spacing:4.268px">Aliquet nec ullamcorper sit amet risus nullam. Risus pretium</div>
<div class="abs doc" style="left:588px;top:649.52px;word-spacing:7.026px">quam vulputate dignissim suspendisse. Pellentesque habitant</div>
<div class="abs doc" style="left:588px;top:688.10px;word-spacing:6.907px">morbi tristique senectus et netus. Arcu cursus vitae congue</div>
<div class="abs doc" style="left:588px;top:726.68px;word-spacing:0.327px">mauris rhoncus. Tortor condimentum lacinia quis vel eros. Vitae</div>
<div class="abs doc" style="left:588px;top:765.26px;word-spacing:8.667px">tortor condimentum lacinia quis vel eros donec. Nibh sed</div>
<div class="abs doc" style="left:588px;top:803.84px;word-spacing:7.980px">pulvinar proin gravida hendrerit lectus. Condimentum vitae</div>
<div class="abs doc" style="left:588px;top:842.42px;word-spacing:3.887px">sapien pellentesque habitant morbi tristique. Id volutpat lacus</div>
<div class="abs doc" style="left:588px;top:881.00px;word-spacing:-0.114px">laoreet non curabitur gravida arcu ac tortor. Porta nibh venenatis</div>
<div class="abs doc" style="left:588px;top:919.58px;word-spacing:1.605px">cras sed felis eget. Mattis vulputate enim nulla aliquet porttitor</div>
<div class="abs doc" style="left:588px;top:958.16px;word-spacing:5.233px">lacus luctus accumsan tortor. Fringilla urna porttitor rhoncus</div>
<div class="abs doc" style="left:588px;top:996.74px">dolor purus non enim praesent.</div>
<!-- ===== style menu ===== -->
<div class="abs" style="left:233px;top:179px;width:221px;height:477px;background:#fff;border-radius:6px;box-shadow:0 1px 2px 0 rgba(60,64,67,.18),0 3px 7px 2px rgba(60,64,67,.15)"></div>
<div class="abs" style="left:234px;top:251px;width:219px;height:1px;background:#dadce0"></div>
<div class="abs" style="left:234px;top:323px;width:219px;height:1px;background:#dadce0"></div>
<div class="abs" style="left:234px;top:395px;width:219px;height:1px;background:#dadce0"></div>
<div class="abs" style="left:234px;top:610px;width:219px;height:1px;background:#dadce0"></div>
<div class="abs" style="left:235px;top:471px;width:216px;height:63px;background:#eeeff1"></div>
<div class="abs mi" style="left:272px;top:206px;font-size:15.1px;color:#000">Normal text</div>
<div class="abs mi" style="left:271px;top:270px;font-size:33px;color:#000">Title</div>
<div class="abs mi" style="left:272px;top:348px;font-size:20.7px;color:#666">Subtitle</div>
<div class="abs mi" style="left:271px;top:416px;font-size:27.1px;color:#000">Heading 1</div>
<div class="abs mi" style="left:272px;top:491px;font-size:22.2px;color:#000">Heading 2</div>
<div class="abs mi" style="left:272px;top:565px;font-size:19.5px;color:#434343">Heading 3</div>
<div class="abs mi" style="left:272px;top:625px;font-size:14.7px;color:#202124">Options</div>
<svg class="abs" style="left:239px;top:496px" width="14" height="12" viewBox="0 0 14 12"><path d="M1 6.5L4.5 10L13 1.5" stroke="#5f6368" stroke-width="1.6" fill="none"/></svg>
<svg class="abs" style="left:431px;top:211px" width="7" height="8" viewBox="0 0 7 8"><path d="M0 0L6.5 4L0 8Z" fill="#808080"/></svg>
<svg class="abs" style="left:431px;top:283px" width="7" height="8" viewBox="0 0 7 8"><path d="M0 0L6.5 4L0 8Z" fill="#808080"/></svg>
<svg class="abs" style="left:431px;top:355px" width="7" height="8" viewBox="0 0 7 8"><path d="M0 0L6.5 4L0 8Z" fill="#808080"/></svg>
<svg class="abs" style="left:431px;top:427px" width="7" height="8" viewBox="0 0 7 8"><path d="M0 0L6.5 4L0 8Z" fill="#808080"/></svg>
<svg class="abs" style="left:431px;top:499px" width="7" height="8" viewBox="0 0 7 8"><path d="M0 0L6.5 4L0 8Z" fill="#202124"/></svg>
<svg class="abs" style="left:431px;top:570px" width="7" height="8" viewBox="0 0 7 8"><path d="M0 0L6.5 4L0 8Z" fill="#808080"/></svg>
<svg class="abs" style="left:431px;top:628px" width="7" height="8" viewBox="0 0 7 8"><path d="M0 0L6.5 4L0 8Z" fill="#808080"/></svg>
<!-- submenu -->
<div class="abs" style="left:453px;top:468px;width:276px;height:95px;background:#fff;border-radius:0 6px 6px 6px;box-shadow:0 1px 2px 0 rgba(60,64,67,.18),0 3px 7px 2px rgba(60,64,67,.15)"></div>
<div class="abs" style="left:455px;top:475px;width:273px;height:32px;background:#f1f3f4"></div>
<div class="abs" style="left:490px;top:515px;width:238px;height:1px;background:#dadce0"></div>
<div class="abs" style="left:492px;top:483px;font-size:14px;color:#202124;white-space:nowrap;letter-spacing:0.15px">Apply 'Heading 2'</div>
<div class="abs" style="left:632px;top:483px;width:81px;text-align:right;font-size:14.2px;color:#80868b;-webkit-text-stroke:0.4px #80868b;white-space:nowrap">⌘+Option+2</div>
<div class="abs" style="left:492px;top:532px;font-size:14px;color:#202124;white-space:nowrap;letter-spacing:0.2px">Update 'Heading 2' to match</div>
<div class="abs" style="left:231px;top:467px;width:224px;height:71px;border:4.5px solid #f41d1d"></div>
</body></html>
